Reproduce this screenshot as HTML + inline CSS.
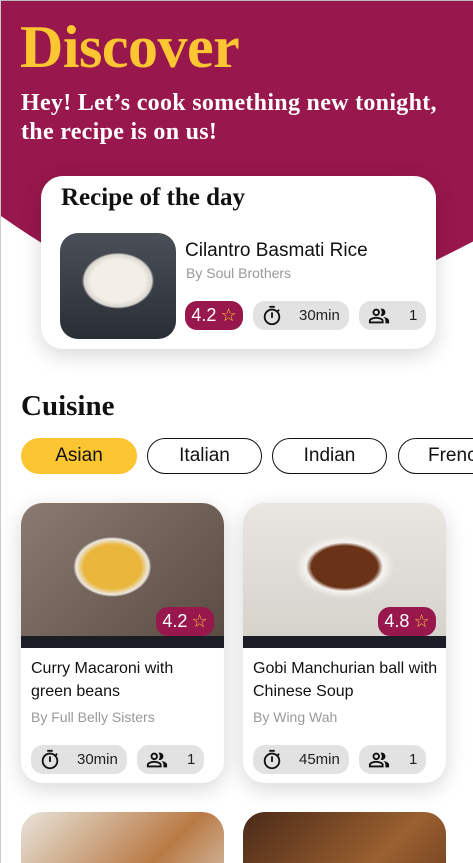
<!DOCTYPE html>
<html><head><meta charset="utf-8"><style>
*{box-sizing:border-box;margin:0;padding:0}
html,body{width:473px;height:863px;overflow:hidden}
body{background:#fff;font-family:"Liberation Sans",sans-serif;position:relative;border-left:1px solid #ccc;border-top:1px solid #bbb}
.serif{font-family:"Liberation Serif",serif;font-weight:bold}
.abs{position:absolute}
.pill{position:absolute;border-radius:12px;background:#e2e2e2;display:flex;align-items:center;font-size:15px;color:#222}
.pill svg{width:22px;height:22px;flex:none}
.rate{position:absolute;background:#98174c;color:#fff;border-radius:12px;display:flex;align-items:center;justify-content:center;font-size:18px}
.card{position:absolute;background:#fff;border-radius:22px;box-shadow:0 6px 22px rgba(0,0,0,.16);overflow:hidden}
.chip{position:absolute;top:437px;height:36px;border-radius:18px;border:1.5px solid #111;font-size:19px;display:flex;align-items:center;justify-content:center;color:#111}
</style></head><body>
<svg width="0" height="0" style="position:absolute"><defs>
<symbol id="tm" viewBox="0 0 24 24"><path d="M15 1H9v2h6V1zm-4 13h2V8h-2v6zm8.03-6.61l1.42-1.42c-.43-.51-.9-.99-1.41-1.41l-1.42 1.42C16.07 4.74 14.12 4 12 4c-4.970 0-9 4.03-9 9s4.02 9 9 9 9-4.03 9-9c0-2.12-.74-4.07-1.970-5.61zM12 20c-3.87 0-7-3.13-7-7s3.13-7 7-7 7 3.13 7 7-3.13 7-7 7z" fill="#111"/></symbol>
<symbol id="pp" viewBox="0 0 24 24"><path d="M16.67 13.13C18.04 14.06 19 15.32 19 17v3h4v-3c0-2.18-3.57-3.47-6.33-3.87zM15 12c2.21 0 4-1.79 4-4s-1.79-4-4-4c-.47 0-.91.1-1.33.24C14.5 5.27 15 6.58 15 8s-.5 2.73-1.33 3.760c.42.14.86.24 1.33.24zm-6 0c2.21 0 4-1.79 4-4s-1.79-4-4-4-4 1.79-4 4 1.79 4 4 4zm0-6c1.1 0 2 .9 2 2s-.9 2-2 2-2-.9-2-2 .9-2 2-2zm0 7c-2.67 0-8 1.34-8 4v3h16v-3c0-2.66-5.33-4-8-4zm6 5H3v-.99C3.2 16.29 6.3 15 9 15s5.8 1.29 6 2v1z" fill="#111"/></symbol>
</defs></svg>
<svg class="abs" style="left:0;top:0" width="473" height="320"><path d="M0 0H473V240Q300 330 236 320Q120 300 0 215Z" fill="#98174c"/></svg>
<div class="abs serif" style="left:19px;top:12px;font-size:60px;color:#fcc532;letter-spacing:-0.5px">Discover</div>
<div class="abs serif" style="left:20px;top:88px;font-size:24px;line-height:29px;color:#fff;letter-spacing:0.3px">Hey! Let’s cook something new tonight,<br>the recipe is on us!</div>

<div class="card" style="left:40px;top:175px;width:395px;height:173px">
 <div class="abs serif" style="left:20px;top:8px;font-size:25px;color:#111">Recipe of the day</div>
 <div class="abs" style="left:19px;top:57px;width:116px;height:106px;border-radius:18px;background:radial-gradient(ellipse 45px 35px at 50% 45%,#f3efe6 60%,#d9d6d0 75%,transparent 80%),linear-gradient(#4b5058,#2a2e35)"></div>
 <div class="abs" style="left:144px;top:64px;font-size:19px;color:#111">Cilantro Basmati Rice</div>
 <div class="abs" style="left:145px;top:89px;font-size:14px;color:#999">By Soul Brothers</div>
 <div class="rate" style="left:144px;top:125px;width:58px;height:29px">4.2 <span style="color:#fcc532;margin-left:4px">☆</span></div>
 <div class="pill" style="left:212px;top:125px;width:96px;height:29px;padding-left:8px"><svg><use href="#tm"/></svg><span style="margin-left:16px">30min</span></div>
 <div class="pill" style="left:318px;top:125px;width:67px;height:29px;padding-left:9px"><svg><use href="#pp"/></svg><span style="margin-left:19px">1</span></div>
</div>

<div class="abs serif" style="left:20px;top:389px;font-size:29px;color:#111">Cuisine</div>
<div class="chip" style="left:20px;width:116px;background:#fcc532;border-color:#fcc532">Asian</div>
<div class="chip" style="left:146px;width:115px">Italian</div>
<div class="chip" style="left:271px;width:115px">Indian</div>
<div class="chip" style="left:397px;width:115px;justify-content:flex-start;padding-left:29px">French</div>

<div class="card" style="left:20px;top:502px;width:203px;height:280px">
 <div class="abs" style="left:0;top:0;width:203px;height:133px;background:radial-gradient(ellipse 52px 40px at 45% 48%,#e9b53a 55%,#ece8e2 70%,transparent 75%),linear-gradient(135deg,#8a7a70,#5b4c44)"></div>
 <div class="abs" style="left:0;top:133px;width:203px;height:12px;background:#1b1e26"></div>
 <div class="rate" style="left:135px;top:104px;width:58px;height:29px">4.2 <span style="color:#fcc532;margin-left:4px">☆</span></div>
 <div class="abs" style="left:10px;top:154px;font-size:16px;line-height:23px;color:#111">Curry Macaroni with<br>green beans</div>
 <div class="abs" style="left:10px;top:206px;font-size:14px;color:#999">By Full Belly Sisters</div>
 <div class="pill" style="left:10px;top:242px;width:96px;height:29px;padding-left:8px"><svg><use href="#tm"/></svg><span style="margin-left:16px">30min</span></div>
 <div class="pill" style="left:116px;top:242px;width:67px;height:29px;padding-left:9px"><svg><use href="#pp"/></svg><span style="margin-left:19px">1</span></div>
</div>
<div class="card" style="left:242px;top:502px;width:203px;height:280px">
 <div class="abs" style="left:0;top:0;width:203px;height:133px;background:radial-gradient(ellipse 55px 35px at 50% 48%,#6a3318 60%,#f6f4f1 70%,transparent 90%),linear-gradient(#e9e6e2,#d6d2cc)"></div>
 <div class="abs" style="left:0;top:133px;width:203px;height:12px;background:#1b1e26"></div>
 <div class="rate" style="left:135px;top:104px;width:58px;height:29px">4.8 <span style="color:#fcc532;margin-left:4px">☆</span></div>
 <div class="abs" style="left:10px;top:154px;font-size:16px;line-height:23px;color:#111">Gobi Manchurian ball with<br>Chinese Soup</div>
 <div class="abs" style="left:10px;top:206px;font-size:14px;color:#999">By Wing Wah</div>
 <div class="pill" style="left:10px;top:242px;width:96px;height:29px;padding-left:8px"><svg><use href="#tm"/></svg><span style="margin-left:16px">45min</span></div>
 <div class="pill" style="left:116px;top:242px;width:67px;height:29px;padding-left:9px"><svg><use href="#pp"/></svg><span style="margin-left:19px">1</span></div>
</div>
<div class="abs" style="left:0;top:800px;width:473px;height:63px;overflow:hidden">
<div class="abs" style="left:20px;top:11px;width:203px;height:100px;border-radius:22px;background:linear-gradient(135deg,#e8e4dc,#b97a44 60%,#d9cfc3)"></div>
<div class="abs" style="left:242px;top:11px;width:203px;height:100px;border-radius:22px;background:linear-gradient(135deg,#4a2a18,#9a6030 60%,#6a3a1c)"></div>
</div>
</body></html>
